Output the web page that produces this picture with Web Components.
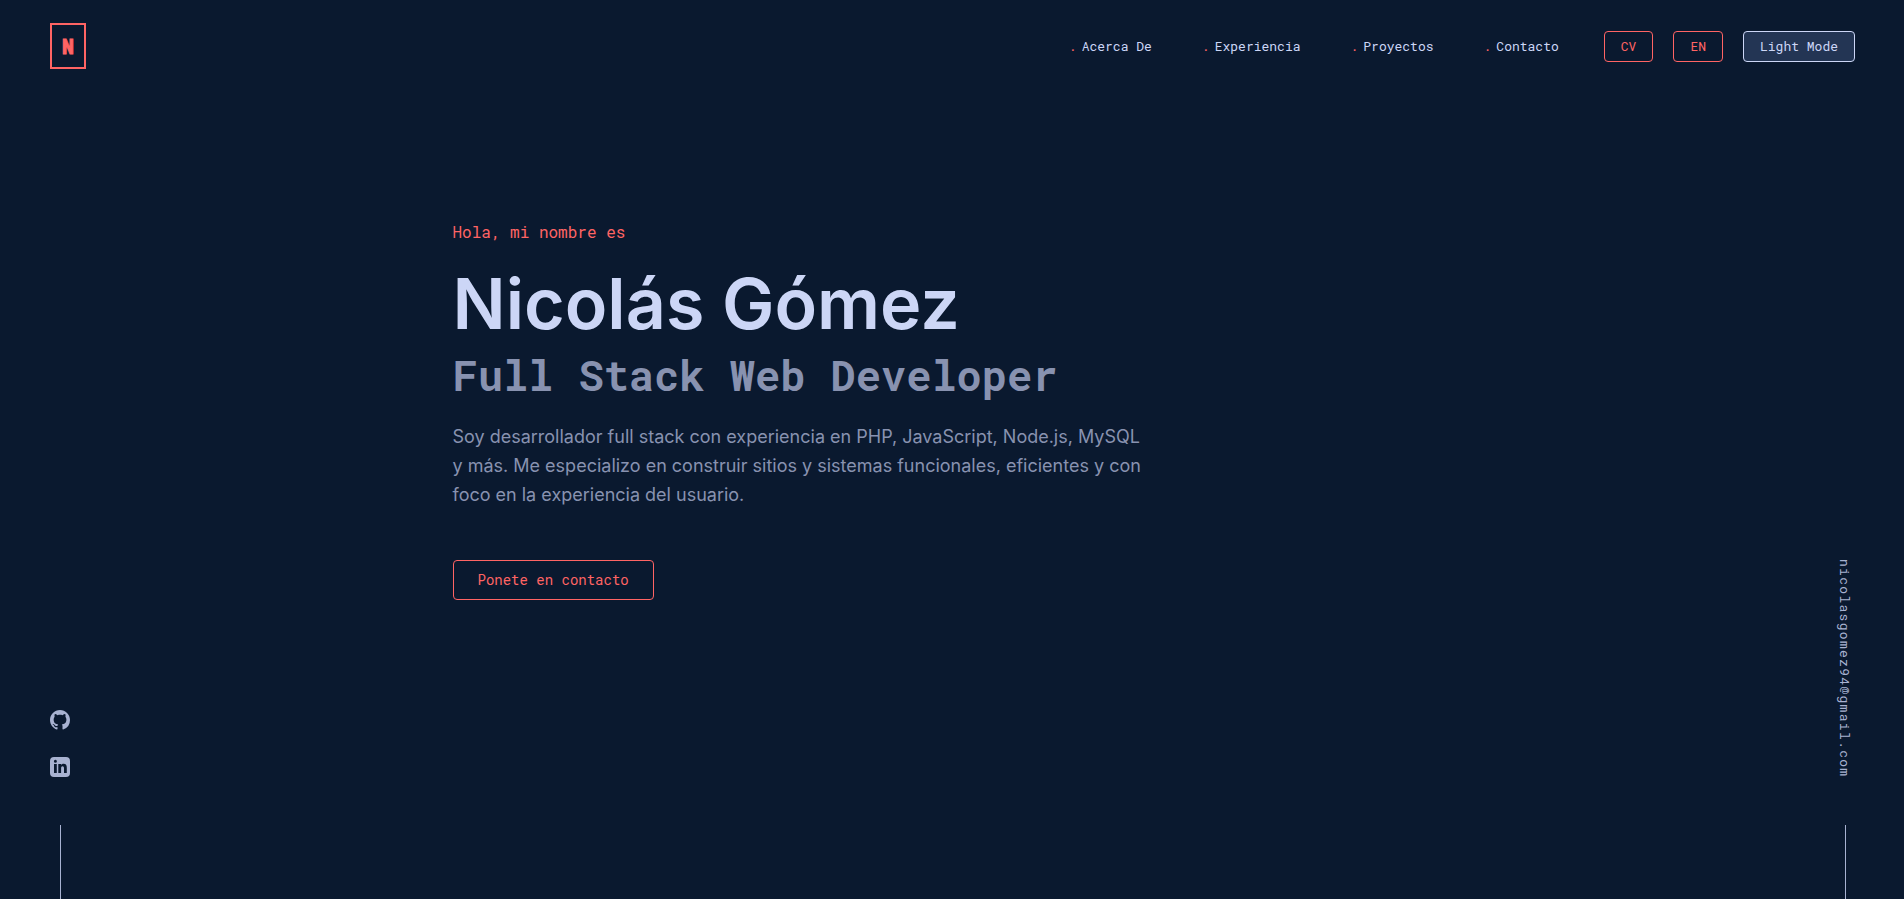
<!DOCTYPE html>
<html lang="es">
<head>
<meta charset="utf-8">
<meta name="viewport" content="width=device-width, initial-scale=1">
<title>Nicolás Gómez</title>
<style>
:root{--navy:#0a192f;--accent:#ff6464;--white:#ccd6f6;--light:#a8b2d1;--slate:#8892b0;--tint:#233554;--mono:"Roboto Mono","Liberation Mono",monospace;--sans:Inter,sans-serif}
body{margin:0;background:var(--navy);color:var(--slate);font-family:var(--sans)}
</style>
</head>
<body>
<portfolio-page></portfolio-page>
<script>
const define = (name, html) => customElements.define(name, class extends HTMLElement {
  constructor() {
    super();
    const t = document.createElement('template');
    t.innerHTML = html;
    this.attachShadow({ mode: 'open' }).append(t.content.cloneNode(true));
  }
});

define('site-logo', `
<style>
:host{display:block}
a{display:flex;box-sizing:border-box;width:36px;height:46px;border:2px solid var(--accent);align-items:center;justify-content:center;color:var(--accent);font:700 20px/24px var(--mono);-webkit-text-stroke:1px var(--accent);text-decoration:none}
</style>
<a href="#inicio" aria-label="Inicio">N</a>`);

define('nav-item', `
<style>
:host{display:block}
a{display:flex;gap:5px;color:var(--white);font:400 13px/20px var(--mono);text-decoration:none}
span{color:var(--accent)}
</style>
<a href="#"><span>.</span><slot></slot></a>`);

define('pill-button', `
<style>
:host{display:block}
button{box-sizing:border-box;display:block;padding:0 16px;height:31px;border:1px solid var(--accent);border-radius:4px;background:transparent;color:var(--accent);font:400 13px/20px var(--mono);cursor:pointer}
:host([large]) button{height:40px;padding:0 24px;font-size:14px}
:host([filled]) button{background:var(--tint);color:var(--white);border-color:var(--white)}
</style>
<button type="button"><slot></slot></button>`);

define('site-header', `
<style>
:host{display:flex;align-items:center;justify-content:space-between;box-sizing:border-box;height:92px;padding:0 49px 0 50px}
nav,.actions,.right{display:flex;align-items:center}
nav{gap:50px}.actions{gap:20px}.right{gap:45px}
</style>
<site-logo></site-logo>
<div class="right">
  <nav><nav-item>Acerca De</nav-item><nav-item>Experiencia</nav-item><nav-item>Proyectos</nav-item><nav-item>Contacto</nav-item></nav>
  <div class="actions"><pill-button>CV</pill-button><pill-button>EN</pill-button><pill-button filled>Light Mode</pill-button></div>
</div>`);

define('hero-intro', `
<style>
:host{display:block;width:100%;max-width:1000px;padding-top:128px}
p,h1,h2{margin:0}
.hi{color:var(--accent);font:400 16px/24px var(--mono);margin-bottom:20px}
h1{color:var(--white);font:600 70px/80px var(--sans)}
h2{color:var(--slate);font:700 42px/62px var(--mono)}
.bio{max-width:700px;font:400 18px/29px var(--sans);margin:16px 0 51px}
</style>
<p class="hi">Hola, mi nombre es</p>
<h1>Nicolás Gómez</h1>
<h2>Full Stack Web Developer</h2>
<p class="bio">Soy desarrollador full stack con experiencia en PHP, JavaScript, Node.js, MySQL y más. Me especializo en construir sitios y sistemas funcionales, eficientes y con foco en la experiencia del usuario.</p>
<pill-button large>Ponete en contacto</pill-button>`);

define('side-rail', `
<style>
:host{display:flex;flex-direction:column;align-items:center;align-self:end;gap:48px}
:host::after{content:"";width:1px;height:74px;background:var(--light)}
</style>
<slot></slot>`);

define('social-links', `
<style>
:host{display:flex;flex-direction:column;gap:27px}
a{display:block;color:var(--light)}
svg{display:block;width:20px;height:20px;fill:currentColor}
</style>
<a href="#github" aria-label="GitHub"><svg viewBox="0 0 16 16"><path d="M8 0C3.58 0 0 3.58 0 8c0 3.54 2.29 6.53 5.47 7.59.4.07.55-.17.55-.38 0-.19-.01-.82-.01-1.49-2.01.37-2.53-.49-2.69-.94-.09-.23-.48-.94-.82-1.13-.28-.15-.68-.52-.01-.53.63-.01 1.08.58 1.23.82.72 1.21 1.87.87 2.33.66.07-.52.28-.87.51-1.07-1.78-.2-3.64-.89-3.64-3.95 0-.87.31-1.59.82-2.15-.08-.2-.36-1.02.08-2.12 0 0 .67-.21 2.2.82.64-.18 1.32-.27 2-.27s1.36.09 2 .27c1.53-1.04 2.2-.82 2.2-.82.44 1.1.16 1.92.08 2.12.51.56.82 1.27.82 2.15 0 3.07-1.87 3.75-3.65 3.95.29.25.54.73.54 1.48 0 1.07-.01 1.93-.01 2.2 0 .21.15.46.55.38A8.01 8.01 0 0 0 16 8c0-4.42-3.58-8-8-8z"/></svg></a>
<a href="#linkedin" aria-label="LinkedIn"><svg viewBox="0 0 20 20"><path fill-rule="evenodd" d="M4 0h12a4 4 0 0 1 4 4v12a4 4 0 0 1-4 4H4a4 4 0 0 1-4-4V4a4 4 0 0 1 4-4zM4 6.9V16h2.8V6.9zM5.4 2.7a1.5 1.5 0 1 0 0 3 1.5 1.5 0 0 0 0-3zM8.3 6.9V16h2.8v-4.7c0-1.2.4-2.1 1.5-2.1s1.4 1 1.4 2.1V16h2.8v-5.2c0-2.6-.8-4.1-3.2-4.1-1.3 0-2.1.6-2.5 1.4V6.9z"/></svg></a>`);

define('email-link', `
<style>
:host{display:block}
a{display:block;writing-mode:vertical-rl;color:var(--light);font:400 13px/20px var(--mono);letter-spacing:.1em;text-decoration:none}
</style>
<a href="mailto:nicolasgomez94@gmail.com">nicolasgomez94@gmail.com</a>`);

define('portfolio-page', `
<style>
:host{display:grid;grid-template-rows:auto 1fr;min-height:100vh}
main{display:grid;grid-template-columns:auto minmax(0,1fr) auto;padding:0 49px 0 50px}
hero-intro{justify-self:center}
</style>
<site-header></site-header>
<main>
  <side-rail><social-links></social-links></side-rail>
  <hero-intro></hero-intro>
  <side-rail><email-link></email-link></side-rail>
</main>`);
</script>
</body>
</html>
